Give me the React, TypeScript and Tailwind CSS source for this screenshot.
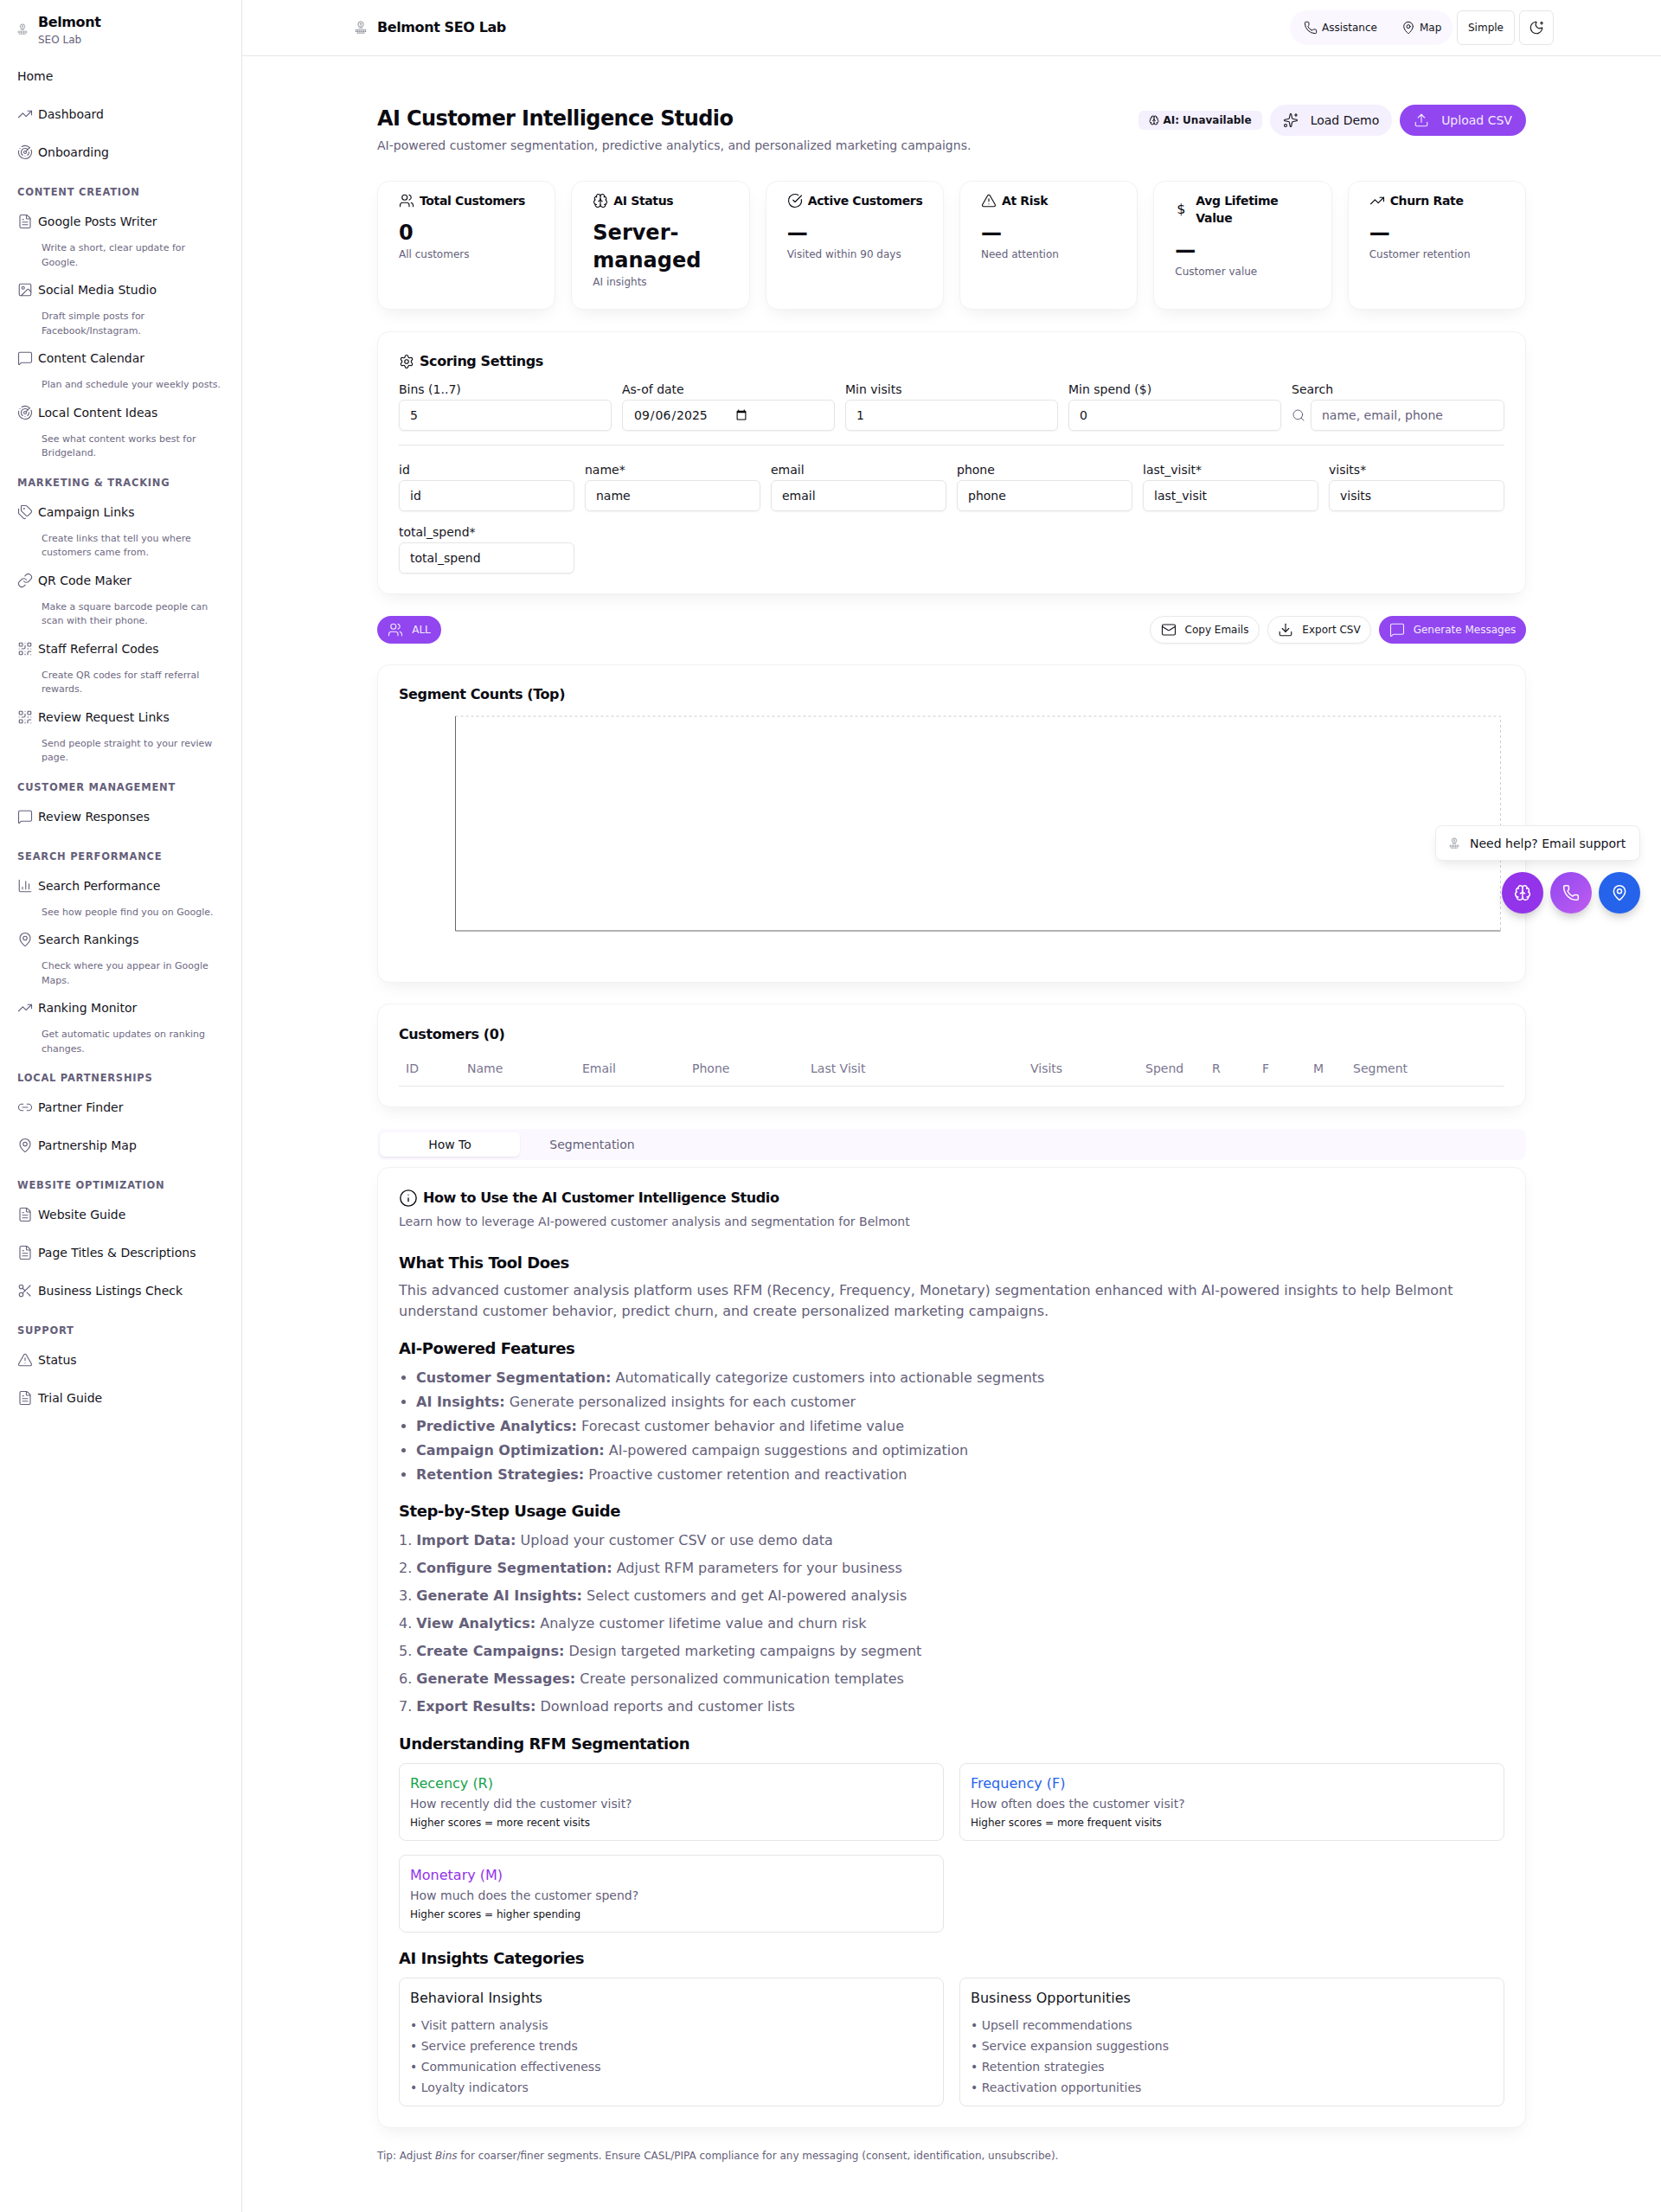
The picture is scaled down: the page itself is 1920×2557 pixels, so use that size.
import {
  Brain,
  ChartColumn,
  CircleCheckBig,
  Download,
  FileText,
  Image,
  Info,
  Link,
  Link2,
  Mail,
  MapPin,
  MessageSquare,
  MoonStar,
  Phone,
  QrCode,
  Radar,
  Scissors,
  Search,
  Settings,
  Sparkles,
  Tags,
  TrendingUp,
  TriangleAlert,
  Upload,
  Users,
  type LucideIcon,
} from "lucide-react";

type NavItem = { label: string; icon?: LucideIcon; desc?: string };
type NavGroup = { title?: string; items: NavItem[] };

const navGroups: NavGroup[] = [
  {
    items: [
      { label: "Home" },
      { label: "Dashboard", icon: TrendingUp },
      { label: "Onboarding", icon: Radar },
    ],
  },
  {
    title: "Content Creation",
    items: [
      { label: "Google Posts Writer", icon: FileText, desc: "Write a short, clear update for Google." },
      { label: "Social Media Studio", icon: Image, desc: "Draft simple posts for Facebook/Instagram." },
      { label: "Content Calendar", icon: MessageSquare, desc: "Plan and schedule your weekly posts." },
      { label: "Local Content Ideas", icon: Radar, desc: "See what content works best for Bridgeland." },
    ],
  },
  {
    title: "Marketing & Tracking",
    items: [
      { label: "Campaign Links", icon: Tags, desc: "Create links that tell you where customers came from." },
      { label: "QR Code Maker", icon: Link, desc: "Make a square barcode people can scan with their phone." },
      { label: "Staff Referral Codes", icon: QrCode, desc: "Create QR codes for staff referral rewards." },
      { label: "Review Request Links", icon: QrCode, desc: "Send people straight to your review page." },
    ],
  },
  {
    title: "Customer Management",
    items: [{ label: "Review Responses", icon: MessageSquare }],
  },
  {
    title: "Search Performance",
    items: [
      { label: "Search Performance", icon: ChartColumn, desc: "See how people find you on Google." },
      { label: "Search Rankings", icon: MapPin, desc: "Check where you appear in Google Maps." },
      { label: "Ranking Monitor", icon: TrendingUp, desc: "Get automatic updates on ranking changes." },
    ],
  },
  {
    title: "Local Partnerships",
    items: [
      { label: "Partner Finder", icon: Link2 },
      { label: "Partnership Map", icon: MapPin },
    ],
  },
  {
    title: "Website Optimization",
    items: [
      { label: "Website Guide", icon: FileText },
      { label: "Page Titles & Descriptions", icon: FileText },
      { label: "Business Listings Check", icon: Scissors },
    ],
  },
  {
    title: "Support",
    items: [
      { label: "Status", icon: TriangleAlert },
      { label: "Trial Guide", icon: FileText },
    ],
  },
];

const stats: { icon?: LucideIcon; title: string; value: string; sub: string }[] = [
  { icon: Users, title: "Total Customers", value: "0", sub: "All customers" },
  { icon: Brain, title: "AI Status", value: "Server-managed", sub: "AI insights" },
  { icon: CircleCheckBig, title: "Active Customers", value: "—", sub: "Visited within 90 days" },
  { icon: TriangleAlert, title: "At Risk", value: "—", sub: "Need attention" },
  { title: "Avg Lifetime Value", value: "—", sub: "Customer value" },
  { icon: TrendingUp, title: "Churn Rate", value: "—", sub: "Customer retention" },
];

const columnFields = ["id", "name*", "email", "phone", "last_visit*", "visits*", "total_spend*"];

const tableHeaders = ["ID", "Name", "Email", "Phone", "Last Visit", "Visits", "Spend", "R", "F", "M", "Segment"];

const features = [
  ["Customer Segmentation:", "Automatically categorize customers into actionable segments"],
  ["AI Insights:", "Generate personalized insights for each customer"],
  ["Predictive Analytics:", "Forecast customer behavior and lifetime value"],
  ["Campaign Optimization:", "AI-powered campaign suggestions and optimization"],
  ["Retention Strategies:", "Proactive customer retention and reactivation"],
];

const steps = [
  ["Import Data:", "Upload your customer CSV or use demo data"],
  ["Configure Segmentation:", "Adjust RFM parameters for your business"],
  ["Generate AI Insights:", "Select customers and get AI-powered analysis"],
  ["View Analytics:", "Analyze customer lifetime value and churn risk"],
  ["Create Campaigns:", "Design targeted marketing campaigns by segment"],
  ["Generate Messages:", "Create personalized communication templates"],
  ["Export Results:", "Download reports and customer lists"],
];

const rfm = [
  { title: "Recency (R)", color: "text-[#16a34a]", q: "How recently did the customer visit?", note: "Higher scores = more recent visits" },
  { title: "Frequency (F)", color: "text-[#2563eb]", q: "How often does the customer visit?", note: "Higher scores = more frequent visits" },
  { title: "Monetary (M)", color: "text-[#9333ea]", q: "How much does the customer spend?", note: "Higher scores = higher spending" },
];

const insights = [
  { title: "Behavioral Insights", items: ["Visit pattern analysis", "Service preference trends", "Communication effectiveness", "Loyalty indicators"] },
  { title: "Business Opportunities", items: ["Upsell recommendations", "Service expansion suggestions", "Retention strategies", "Reactivation opportunities"] },
];

function Logo({ className }: { className: string }) {
  return (
    <svg viewBox="0 0 16 18" className={className} aria-hidden>
      <circle cx="8" cy="4.5" r="3.6" fill="none" stroke="#7d828b" strokeWidth="1" />
      <path d="M8 2.5v4M6.5 4h3" stroke="#7d828b" strokeWidth="0.8" />
      <path d="M5 9.5h6" stroke="#9aa0a8" strokeWidth="1" />
      <path d="M1 12h14M1 14h14M3 16h10" stroke="#7d828b" strokeWidth="1.2" strokeDasharray="1.5 0.6" />
    </svg>
  );
}

function Sidebar() {
  return (
    <aside className="w-[280px] shrink-0 border-r border-[#e5e5e5] bg-white pl-5 pr-4">
      <div className="flex h-[66px] items-center gap-3 pt-[2px]">
        <Logo className="h-[14px] w-3" />
        <div>
          <div className="text-[16px] leading-6 font-bold tracking-tight text-[#0b0b12]">Belmont</div>
          <div className="text-xs leading-4 text-[#655f7a]">SEO Lab</div>
        </div>
      </div>
      {navGroups.map((group, i) => (
        <div key={i} className={group.title ? "pt-[15px]" : ""}>
          {group.title && (
            <div className="mb-1 h-[17px] text-[11.5px] leading-[19px] font-bold tracking-[0.065em] text-[#655f7a] uppercase">
              {group.title}
            </div>
          )}
          {group.items.map((item) => (
            <div key={item.label}>
              <div className="flex h-11 items-center gap-1.5 text-sm text-[#14141c]">
                {item.icon && <item.icon className="h-[18px] w-[18px] shrink-0 text-[#655f7a]" strokeWidth={1.5} />}
                <span>{item.label}</span>
              </div>
              {item.desc && (
                <p className="my-px w-[237px] pl-7 text-[11px] leading-[16.5px] text-[#6e6982]">{item.desc}</p>
              )}
            </div>
          ))}
        </div>
      ))}
    </aside>
  );
}

function TopBar() {
  return (
    <header className="flex h-[65px] items-center justify-between border-b border-[#e5e5e5] pr-[124px] pl-[130px]">
      <div className="flex items-center gap-3">
        <Logo className="h-5 w-[14px]" />
        <span className="text-[16px] font-bold tracking-tight text-[#0b0b12]">Belmont SEO Lab</span>
      </div>
      <div className="flex items-center gap-[5px]">
        <div className="flex h-10 w-[188px] items-center gap-7 rounded-full bg-[#faf7ff] pl-4 text-xs text-[#14141c]">
          <span className="flex items-center gap-[5px]">
            <Phone className="h-4 w-4" strokeWidth={1.5} />
            Assistance
          </span>
          <span className="flex items-center gap-[5px]">
            <MapPin className="h-4 w-4" strokeWidth={1.5} />
            Map
          </span>
        </div>
        <div className="flex h-10 w-[67px] items-center justify-center rounded-md border border-[#e5e5e5] text-xs text-[#14141c]">
          Simple
        </div>
        <div className="flex h-10 w-10 items-center justify-center rounded-md border border-[#e5e5e5]">
          <MoonStar className="h-[18px] w-[18px] text-[#14141c]" strokeWidth={1.5} />
        </div>
      </div>
    </header>
  );
}

function Card({ className, children }: { className: string; children: React.ReactNode }) {
  return (
    <section className={`rounded-[14px] border border-[#f2f1f4] bg-white shadow-[0_8px_20px_-6px_rgba(20,15,40,0.08)] ${className}`}>
      {children}
    </section>
  );
}

function Field({ label, value, className = "" }: { label: string; value: string; className?: string }) {
  return (
    <label className={`block ${className}`}>
      <span className="block h-[23px] text-sm leading-[22px] text-[#14141c]">{label}</span>
      <input
        readOnly
        value={value}
        className="h-9 w-full rounded-md border border-[#e5e5e5] px-3 text-sm text-[#14141c] shadow-[0_1px_2px_rgba(0,0,0,0.05)] outline-none"
      />
    </label>
  );
}

function PageHeader() {
  return (
    <div className="flex items-start justify-between">
      <div>
        <h1 className="text-2xl leading-8 font-bold tracking-tight text-[#0b0b12]">AI Customer Intelligence Studio</h1>
        <p className="mt-[5px] text-sm leading-5 text-[#655f7a]">
          AI-powered customer segmentation, predictive analytics, and personalized marketing campaigns.
        </p>
      </div>
      <div className="flex items-center gap-[9px]">
        <span className="flex h-[22px] w-[143px] items-center justify-center gap-1 rounded-md bg-[#f5f0fd] text-xs font-bold text-[#14141c]">
          <Brain className="h-3 w-3" strokeWidth={2} />
          AI: Unavailable
        </span>
        <button className="flex h-9 w-[141px] items-center justify-center gap-[14px] rounded-full bg-[#f5f0fd] text-sm text-[#14141c]">
          <Sparkles className="h-[18px] w-[18px]" strokeWidth={1.5} />
          Load Demo
        </button>
        <button className="flex h-9 w-[146px] items-center justify-center gap-[14px] rounded-full bg-[#9146f0] text-sm text-[#f3ebff]">
          <Upload className="h-[18px] w-[18px]" strokeWidth={1.5} />
          Upload CSV
        </button>
      </div>
    </div>
  );
}

function StatCards() {
  return (
    <div className="mt-[31px] grid grid-cols-6 gap-[18px]">
      {stats.map((s) => (
        <Card key={s.title} className="h-[149px] pt-3 pr-5 pl-6">
          <div className="flex min-h-[20px] items-center gap-1.5 text-sm leading-5 font-bold tracking-tight text-[#0b0b12]">
            {s.icon ? (
              <s.icon className="h-[18px] w-[18px] shrink-0" strokeWidth={1.5} />
            ) : (
              <span className="w-[18px] shrink-0 pl-0.5 text-[16px] font-normal">$</span>
            )}
            <span>{s.title}</span>
          </div>
          <div className="mt-[11px] text-2xl leading-8 font-bold text-[#0b0b12]">{s.value}</div>
          <div className="mt-px text-xs leading-4 text-[#655f7a]">{s.sub}</div>
        </Card>
      ))}
    </div>
  );
}

function ScoringSettings() {
  return (
    <Card className="mt-[25px] h-[304px] px-6 pt-[22px]">
      <h2 className="flex items-center gap-1.5 text-[16px] leading-6 font-bold tracking-tight text-[#0b0b12]">
        <Settings className="h-[18px] w-[18px]" strokeWidth={1.5} />
        Scoring Settings
      </h2>
      <div className="mt-[9px] grid grid-cols-5 gap-3">
        <Field label="Bins (1..7)" value="5" />
        <label className="block">
          <span className="block h-[23px] text-sm leading-[22px] text-[#14141c]">As-of date</span>
          <input
            type="date"
            defaultValue="2025-09-06"
            className="h-9 w-full rounded-md border border-[#e5e5e5] px-3 text-sm text-[#14141c] shadow-[0_1px_2px_rgba(0,0,0,0.05)] outline-none [&::-webkit-calendar-picker-indicator]:mr-[86px]"
          />
        </label>
        <Field label="Min visits" value="1" />
        <Field label="Min spend ($)" value="0" />
        <div>
          <span className="block h-[23px] text-sm leading-[22px] text-[#14141c]">Search</span>
          <div className="flex items-center gap-1.5">
            <Search className="h-4 w-4 shrink-0 text-[#655f7a]" strokeWidth={1.5} />
            <input
              readOnly
              placeholder="name, email, phone"
              className="h-9 w-full rounded-md border border-[#e5e5e5] px-3 text-sm shadow-[0_1px_2px_rgba(0,0,0,0.05)] outline-none placeholder:text-[#655f7a]"
            />
          </div>
        </div>
      </div>
      <div className="mt-4 border-t border-[#e5e5e5]" />
      <div className="mt-[17px] grid grid-cols-6 gap-x-3 gap-y-[13px]">
        {columnFields.map((f) => (
          <Field key={f} label={f} value={f.replace("*", "")} />
        ))}
      </div>
    </Card>
  );
}

function ActionRow() {
  return (
    <div className="mt-[25px] flex items-center justify-between text-xs">
      <button className="flex h-8 w-[74px] items-center justify-center gap-2.5 rounded-full bg-[#9146f0] text-[#f3ebff]">
        <Users className="h-[18px] w-[18px]" strokeWidth={1.5} />
        ALL
      </button>
      <div className="flex items-center gap-[9px] text-[#14141c]">
        <button className="flex h-8 w-[127px] items-center justify-center gap-2.5 rounded-full border border-[#e8e8e8] shadow-[0_1px_2px_rgba(0,0,0,0.05)]">
          <Mail className="h-[18px] w-[18px]" strokeWidth={1.5} />
          Copy Emails
        </button>
        <button className="flex h-8 w-[120px] items-center justify-center gap-2.5 rounded-full border border-[#e8e8e8] shadow-[0_1px_2px_rgba(0,0,0,0.05)]">
          <Download className="h-[18px] w-[18px]" strokeWidth={1.5} />
          Export CSV
        </button>
        <button className="flex h-8 w-[170px] items-center justify-center gap-2.5 rounded-full bg-[#9146f0] text-[#f3ebff]">
          <MessageSquare className="h-[18px] w-[18px]" strokeWidth={1.5} />
          Generate Messages
        </button>
      </div>
    </div>
  );
}

function SegmentChart() {
  return (
    <Card className="mt-6 h-[368px] px-6 pt-[22px]">
      <h2 className="text-[16px] leading-6 font-bold tracking-tight text-[#0b0b12]">Segment Counts (Top)</h2>
      <svg viewBox="0 0 1277 260" className="mt-3 h-[260px] w-full" aria-hidden>
        <path d="M65 1H1273V249" fill="none" stroke="#cccccc" strokeDasharray="3 3" />
        <path d="M65 1V249H1273" fill="none" stroke="#666666" />
      </svg>
    </Card>
  );
}

function CustomersTable() {
  return (
    <Card className="mt-6 h-[120px] px-6 pt-[23px]">
      <h2 className="text-[16px] leading-6 font-bold tracking-tight text-[#0b0b12]">Customers (0)</h2>
      <div className="mt-[17px] grid h-[31px] grid-cols-[71px_133px_127px_137px_254px_133px_77px_58px_59px_46px_182px] border-b border-[#e5e5e5] text-sm leading-5 text-[#7a7690]">
        {tableHeaders.map((h) => (
          <span key={h} className="px-2">
            {h}
          </span>
        ))}
      </div>
    </Card>
  );
}

function Tabs() {
  return (
    <div className="mt-[25px] flex h-9 items-center rounded-lg bg-[#fbf9ff] px-[3px] text-sm">
      <span className="flex h-7 w-[162px] items-center justify-center rounded-md bg-white text-[#14141c] shadow-[0_1px_2px_rgba(0,0,0,0.1)]">
        How To
      </span>
      <span className="flex h-7 w-[167px] items-center justify-center text-[#655f7a]">Segmentation</span>
    </div>
  );
}

function Heading({ children, className }: { children: React.ReactNode; className: string }) {
  return <h3 className={`text-[18px] leading-7 font-bold tracking-tight text-[#0b0b12] ${className}`}>{children}</h3>;
}

function HowTo() {
  return (
    <Card className="mt-2 h-[1111px] px-6 pt-[23px]">
      <h2 className="flex items-center gap-1.5 text-[16px] leading-6 font-bold tracking-tight text-[#0b0b12]">
        <Info className="h-[22px] w-[22px]" strokeWidth={1.5} />
        How to Use the AI Customer Intelligence Studio
      </h2>
      <p className="mt-[5px] text-sm leading-5 text-[#655f7a]">
        Learn how to leverage AI-powered customer analysis and segmentation for Belmont
      </p>

      <Heading className="mt-[24px]">What This Tool Does</Heading>
      <p className="mt-[6px] text-[16px] leading-6 text-[#655f7a]">
        This advanced customer analysis platform uses RFM (Recency, Frequency, Monetary) segmentation enhanced with
        AI-powered insights to help Belmont understand customer behavior, predict churn, and create personalized
        marketing campaigns.
      </p>

      <Heading className="mt-[17px]">AI-Powered Features</Heading>
      <ul className="mt-[6px] list-disc pl-5 text-[16px] leading-7 text-[#655f7a]">
        {features.map(([b, t]) => (
          <li key={b}>
            <strong className="font-bold">{b}</strong> {t}
          </li>
        ))}
      </ul>

      <Heading className="mt-[14px]">Step-by-Step Usage Guide</Heading>
      <ol className="mt-1 text-[16px] leading-8 text-[#655f7a]">
        {steps.map(([b, t], i) => (
          <li key={b}>
            {i + 1}. <strong className="font-bold">{b}</strong> {t}
          </li>
        ))}
      </ol>

      <Heading className="mt-[13px]">Understanding RFM Segmentation</Heading>
      <div className="mt-2 grid grid-cols-2 gap-x-[18px] gap-y-4">
        {rfm.map((r) => (
          <div key={r.title} className="h-[90px] rounded-lg border border-[#e5e5e5] px-3 pt-[11px]">
            <div className={`text-[16px] leading-6 ${r.color}`}>{r.title}</div>
            <div className="mt-px text-sm leading-5 text-[#655f7a]">{r.q}</div>
            <div className="mt-0.5 text-xs leading-5 text-[#14141c]">{r.note}</div>
          </div>
        ))}
      </div>

      <Heading className="mt-4">AI Insights Categories</Heading>
      <div className="mt-2 grid grid-cols-2 gap-x-[18px]">
        {insights.map((c) => (
          <div key={c.title} className="h-[149px] rounded-lg border border-[#e5e5e5] px-3 pt-[11px]">
            <div className="text-[16px] leading-6 text-[#14141c]">{c.title}</div>
            <ul className="mt-[7px] text-sm leading-6 text-[#655f7a]">
              {c.items.map((t) => (
                <li key={t}>• {t}</li>
              ))}
            </ul>
          </div>
        ))}
      </div>
    </Card>
  );
}

function FloatingHelp() {
  return (
    <div className="absolute top-[954px] right-6 flex flex-col items-end gap-[13px]">
      <div className="flex h-[41px] w-[237px] items-center gap-3 rounded-lg border border-[#ececec] bg-white pl-[15px] text-sm text-[#14141c] shadow-[0_6px_14px_-4px_rgba(0,0,0,0.12)]">
        <Logo className="h-[14px] w-3" />
        Need help? Email support
      </div>
      <div className="flex gap-2">
        <span className="flex h-12 w-12 items-center justify-center rounded-full bg-[#9333ea] shadow-[0_6px_12px_-3px_rgba(0,0,0,0.25)]">
          <Brain className="h-5 w-5 text-white" strokeWidth={1.8} />
        </span>
        <span className="flex h-12 w-12 items-center justify-center rounded-full bg-gradient-to-br from-[#9146f0] to-[#c05cf0] shadow-[0_6px_12px_-3px_rgba(0,0,0,0.25)]">
          <Phone className="h-5 w-5 text-white" strokeWidth={1.8} />
        </span>
        <span className="flex h-12 w-12 items-center justify-center rounded-full bg-[#2563eb] shadow-[0_6px_12px_-3px_rgba(0,0,0,0.25)]">
          <MapPin className="h-5 w-5 text-white" strokeWidth={1.8} />
        </span>
      </div>
    </div>
  );
}

export default function App() {
  return (
    <div className="relative flex min-h-[2557px] bg-white font-['DejaVu_Sans',sans-serif]">
      <Sidebar />
      <div className="min-w-0 flex-1">
        <TopBar />
        <main className="mx-auto w-[1328px] pt-[56px]">
          <PageHeader />
          <StatCards />
          <ScoringSettings />
          <ActionRow />
          <SegmentChart />
          <CustomersTable />
          <Tabs />
          <HowTo />
          <p className="mt-6 text-xs leading-4 text-[#655f7a]">
            Tip: Adjust <em>Bins</em> for coarser/finer segments. Ensure CASL/PIPA compliance for any messaging (consent,
            identification, unsubscribe).
          </p>
        </main>
      </div>
      <FloatingHelp />
    </div>
  );
}
